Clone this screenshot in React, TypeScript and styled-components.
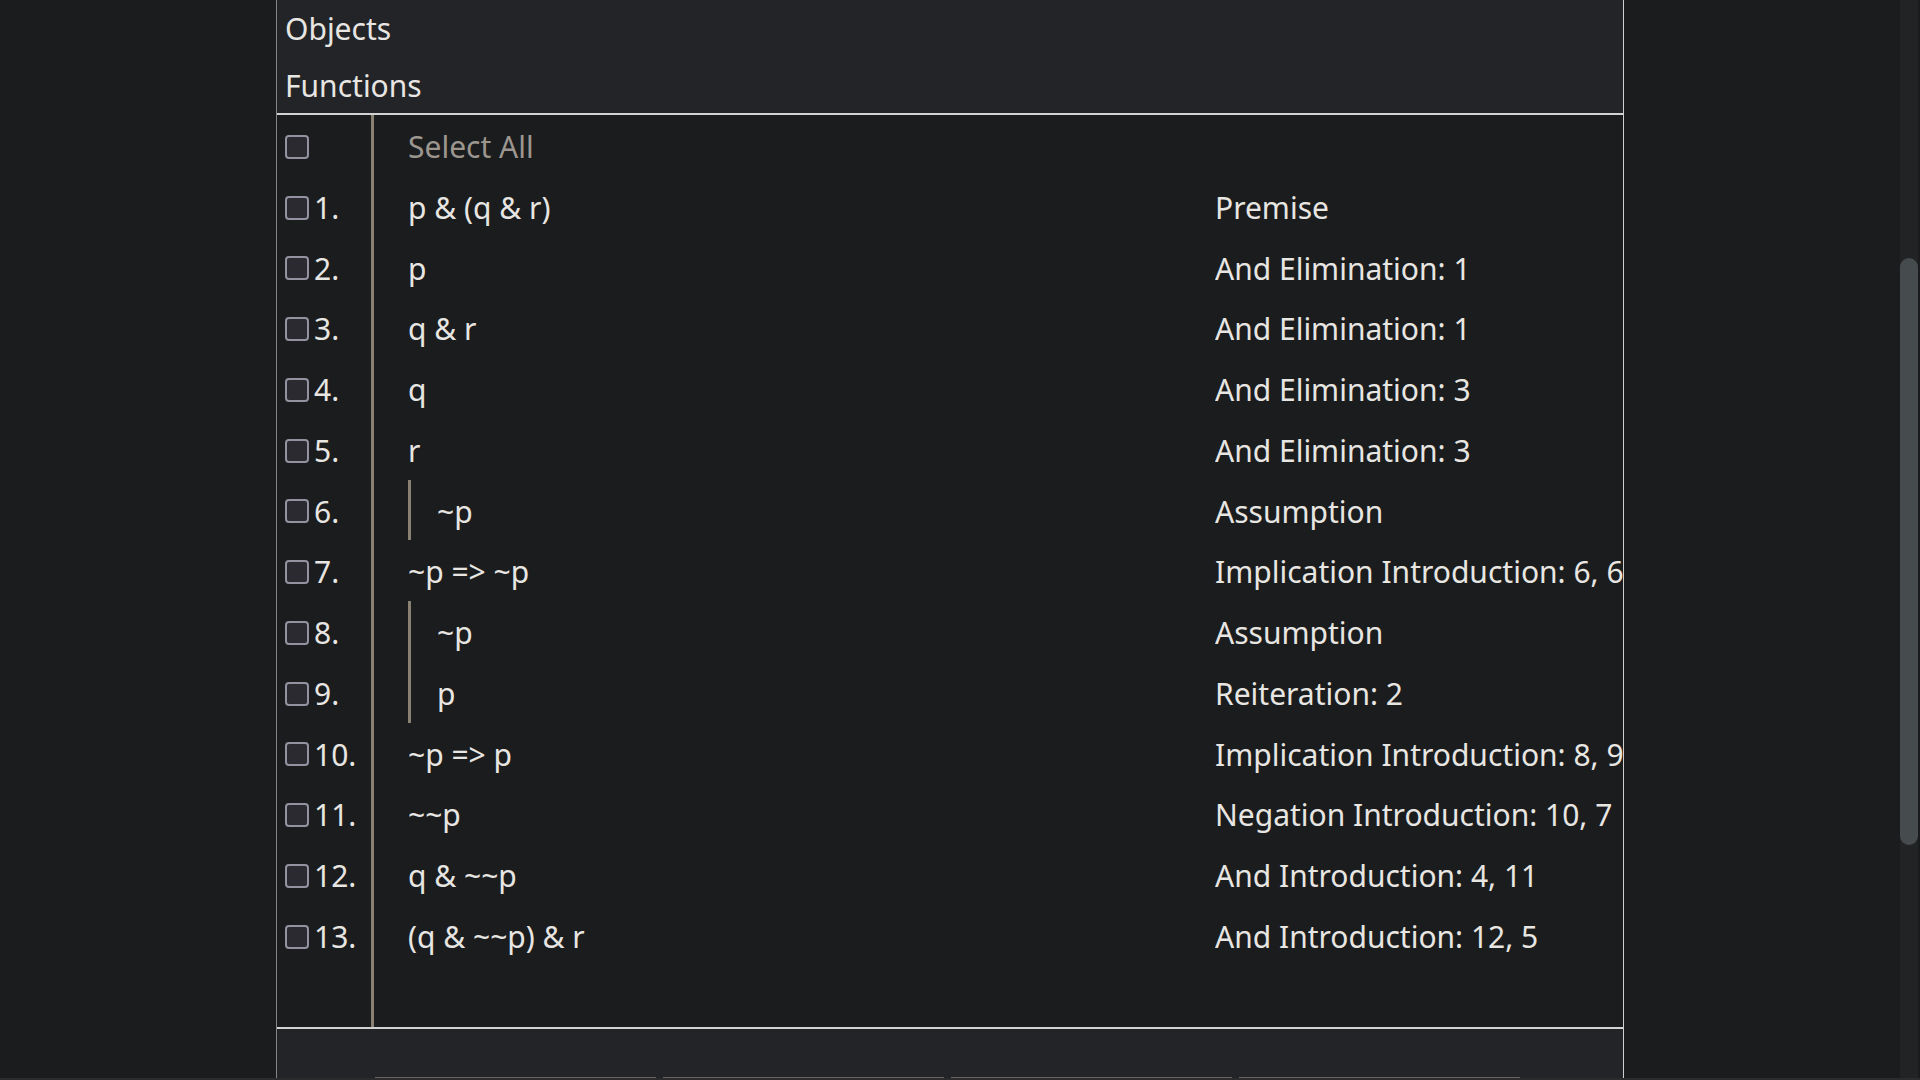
import React from "react";
import styled, { createGlobalStyle } from "styled-components";

const GlobalStyle = createGlobalStyle`
  html, body {
    margin: 0;
    padding: 0;
    background: #1b1c1e;
    overflow: hidden;
  }
  body {
    font-family: "Noto Sans", "Open Sans", sans-serif;
    color: #e6e4e0;
  }
  * { box-sizing: border-box; }
`;

const Page = styled.div`
  width: 1920px;
  height: 1080px;
  display: flex;
  flex-direction: column;
  background: #1b1c1e;
`;

const Main = styled.div`
  flex: 1;
  display: grid;
  grid-template-columns: 276px 1348px 1fr 20px;
  min-height: 0;
`;

const BottomStrip = styled.div`
  height: 2px;
  background: #2c2c2d;
`;

const Spacer = styled.div`
  background: #1b1c1e;
`;

const Panel = styled.section`
  display: flex;
  flex-direction: column;
  border-left: 1px solid #858585;
  border-right: 1px solid #cfcfcf;
  min-height: 0;
`;

const Header = styled.div`
  height: 115px;
  background: #232427;
  border-bottom: 2px solid #d2d2d2;
  display: flex;
  flex-direction: column;
`;

const HeaderItem = styled.div`
  height: 56.5px;
  line-height: 57px;
  font-size: 30px;
  padding-left: 8px;
  color: #e8e6e2;
`;

const List = styled.div`
  flex: 1;
  display: flex;
  flex-direction: column;
  background: #1b1c1e;
  min-height: 0;
  overflow: hidden;
`;

const Row = styled.div<{ $filler?: boolean }>`
  display: flex;
  height: ${(p) => (p.$filler ? "auto" : "60.75px")};
  flex: ${(p) => (p.$filler ? "1" : "0 0 auto")};
  line-height: 60.75px;
  font-size: 30px;
  white-space: nowrap;
`;

const Gutter = styled.div`
  flex: 0 0 97px;
  display: flex;
  align-items: center;
  padding-left: 8px;
  border-right: 3px solid #8a8173;
`;

const Checkbox = styled.span`
  width: 24px;
  height: 24px;
  margin-top: 3px;
  border: 2.5px solid #9491a0;
  border-radius: 4px;
  background: #2b2a31;
  flex: 0 0 auto;
`;

const LineNo = styled.span`
  margin-left: 5px;
  padding-top: 4px;
  color: #e8e6e2;
`;

const Content = styled.div`
  flex: 1;
  display: grid;
  grid-template-columns: 807px 1fr;
  padding-left: 34px;
  padding-top: 2px;
  overflow: hidden;
`;

const Formula = styled.div<{ $muted?: boolean }>`
  display: flex;
  align-items: stretch;
  margin-top: -2px;
  color: ${(p) => (p.$muted ? "#9c968f" : "#e8e6e2")};
`;

const FormulaText = styled.span`
  padding-top: 2px;
`;

const SubproofBar = styled.span`
  width: 3px;
  margin-right: 26px;
  background: #8a8173;
`;

const Justification = styled.div`
  color: #e8e6e2;
  overflow: hidden;
`;

const Footer = styled.div`
  height: 51px;
  background: #232427;
  border-top: 2px solid #d2d2d2;
  display: flex;
  align-items: flex-end;
  gap: 7px;
  padding-left: 98px;
`;

const FooterTab = styled.div`
  width: 281px;
  height: 1px;
  background: #6b655f;
`;

const ScrollTrack = styled.div`
  background: #212324;
  border-right: 2px solid #1a1b1c;
  padding-top: 258px;
`;

const ScrollThumb = styled.div`
  width: 18px;
  height: 587px;
  border-radius: 9px;
  background: #464b4d;
`;

type Line = { n: number; f: string; j: string; depth: number };

const lines: Line[] = [
  { n: 1, f: "p & (q & r)", j: "Premise", depth: 0 },
  { n: 2, f: "p", j: "And Elimination: 1", depth: 0 },
  { n: 3, f: "q & r", j: "And Elimination: 1", depth: 0 },
  { n: 4, f: "q", j: "And Elimination: 3", depth: 0 },
  { n: 5, f: "r", j: "And Elimination: 3", depth: 0 },
  { n: 6, f: "~p", j: "Assumption", depth: 1 },
  { n: 7, f: "~p => ~p", j: "Implication Introduction: 6, 6", depth: 0 },
  { n: 8, f: "~p", j: "Assumption", depth: 1 },
  { n: 9, f: "p", j: "Reiteration: 2", depth: 1 },
  { n: 10, f: "~p => p", j: "Implication Introduction: 8, 9", depth: 0 },
  { n: 11, f: "~~p", j: "Negation Introduction: 10, 7", depth: 0 },
  { n: 12, f: "q & ~~p", j: "And Introduction: 4, 11", depth: 0 },
  { n: 13, f: "(q & ~~p) & r", j: "And Introduction: 12, 5", depth: 0 },
];

export default function App() {
  return (
    <>
      <GlobalStyle />
      <Page>
        <Main>
          <Spacer />
          <Panel>
            <Header>
              <HeaderItem>Objects</HeaderItem>
              <HeaderItem>Functions</HeaderItem>
            </Header>
            <List>
              <Row>
                <Gutter>
                  <Checkbox />
                </Gutter>
                <Content>
                  <Formula $muted>
                    <FormulaText>Select All</FormulaText>
                  </Formula>
                  <Justification />
                </Content>
              </Row>
              {lines.map((l) => (
                <Row key={l.n}>
                  <Gutter>
                    <Checkbox />
                    <LineNo>{l.n}.</LineNo>
                  </Gutter>
                  <Content>
                    <Formula>
                      {Array.from({ length: l.depth }).map((_, i) => (
                        <SubproofBar key={i} />
                      ))}
                      <FormulaText>{l.f}</FormulaText>
                    </Formula>
                    <Justification>{l.j}</Justification>
                  </Content>
                </Row>
              ))}
              <Row $filler>
                <Gutter />
                <Content />
              </Row>
            </List>
            <Footer>
              <FooterTab />
              <FooterTab />
              <FooterTab />
              <FooterTab />
            </Footer>
          </Panel>
          <Spacer />
          <ScrollTrack>
            <ScrollThumb />
          </ScrollTrack>
        </Main>
        <BottomStrip />
      </Page>
    </>
  );
}
